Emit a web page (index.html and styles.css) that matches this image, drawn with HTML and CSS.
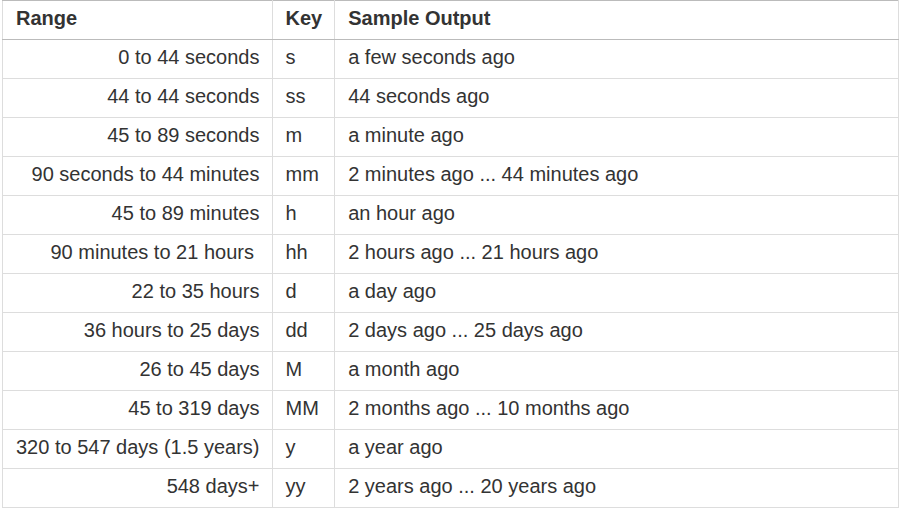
FILE: index.html
```html
<!DOCTYPE html>
<html>
<head>
<meta charset="utf-8">
<link rel="stylesheet" href="styles.css">
</head>
<body>
<table class="tbl">
<thead>
<tr><th>Range</th><th>Key</th><th>Sample Output</th></tr>
</thead>
<tbody>
<tr><td class="r">0 to 44 seconds</td><td>s</td><td>a few seconds ago</td></tr>
<tr><td class="r">44 to 44 seconds</td><td>ss</td><td>44 seconds ago</td></tr>
<tr><td class="r">45 to 89 seconds</td><td>m</td><td>a minute ago</td></tr>
<tr><td class="r">90 seconds to 44 minutes</td><td>mm</td><td>2 minutes ago ... 44 minutes ago</td></tr>
<tr><td class="r">45 to 89 minutes</td><td>h</td><td>an hour ago</td></tr>
<tr><td class="r">90 minutes to 21 hours&nbsp;</td><td>hh</td><td>2 hours ago ... 21 hours ago</td></tr>
<tr><td class="r">22 to 35 hours</td><td>d</td><td>a day ago</td></tr>
<tr><td class="r">36 hours to 25 days</td><td>dd</td><td>2 days ago ... 25 days ago</td></tr>
<tr><td class="r">26 to 45 days</td><td>M</td><td>a month ago</td></tr>
<tr><td class="r">45 to 319 days</td><td>MM</td><td>2 months ago ... 10 months ago</td></tr>
<tr><td class="r">320 to 547 days (1.5 years)</td><td>y</td><td>a year ago</td></tr>
<tr><td class="r">548 days+</td><td>yy</td><td>2 years ago ... 20 years ago</td></tr>
</tbody>
</table>
</body>
</html>
```
FILE: styles.css
```css
html, body {
  margin: 0;
  padding: 0;
  background: #fff;
}
body {
  font-family: "Liberation Sans", Arial, sans-serif;
  font-size: 20px;
  color: #333;
}
.tbl {
  margin-left: 2px;
  width: 897px;
  border-collapse: collapse;
  border: 1px solid #ddd;
}
.tbl th, .tbl td {
  padding: 5px 13px 9px;
  line-height: 24px;
  border: 1px solid #ddd;
  text-align: left;
  white-space: nowrap;
  vertical-align: middle;
}
.tbl th {
  font-weight: bold;
  color: #333;
  border-top: 1px solid #bbb;
  border-bottom: 1px solid #bbb;
}
.tbl td.r { text-align: right; }
.tbl th:first-child, .tbl td:first-child { width: 1%; }
.tbl th:nth-child(2), .tbl td:nth-child(2) { width: 1%; padding-left: 12px; padding-right: 12px; }
```
